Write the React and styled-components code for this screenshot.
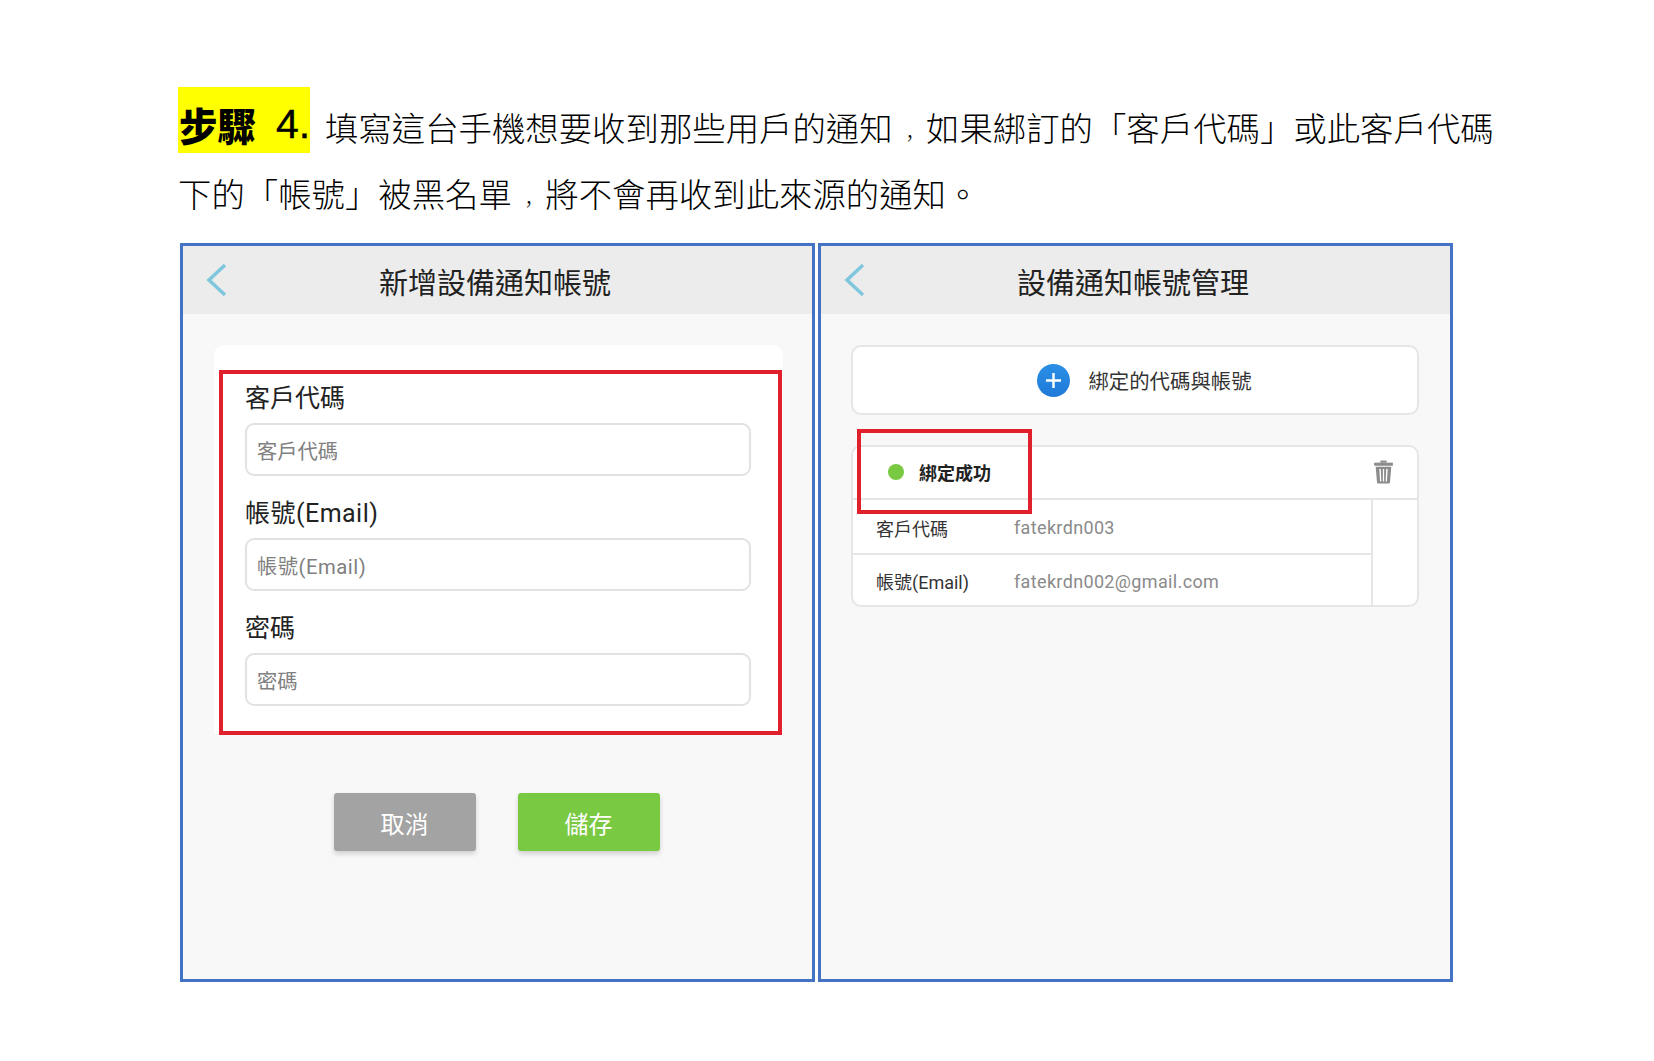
import styled, { createGlobalStyle } from "styled-components";

const GlobalStyle = createGlobalStyle`
  html, body {
    margin: 0;
    background: #fff;
    color: #000;
    font-family: Roboto, "Noto Sans CJK TC", sans-serif;
  }
`;

const Page = styled.div`
  padding: 87px 0 0 178px;
`;

const IntroLine = styled.div`
  display: flex;
  align-items: flex-end;
  height: 66px;
  font-family: "Noto Sans CJK TC", sans-serif;
  font-size: 33.4px;
  font-weight: 300;
  white-space: nowrap;
`;

const TextRun = styled.span`
  line-height: 46px;
  margin-bottom: 3px;
  margin-left: ${(props) => props.$indent || 0}px;
`;

// the comma is small and sits in the middle of its cell in the reference
const Comma = styled.span`
  display: inline-block;
  transform: translate(0, 11px) scale(0.6);
`;

const StepTag = styled.span`
  display: flex;
  align-items: center;
  gap: 20px;
  box-sizing: border-box;
  width: 132px;
  height: 66px;
  padding: 8px 0 0 1px;
  background: #ffff00;
  font-size: 38.5px;
  font-weight: 900;
  line-height: 1;
`;

const StepNumber = styled.span`
  font-family: "Liberation Sans", sans-serif;
  font-weight: 400;
  font-size: 41px;
  -webkit-text-stroke: 0.4px #000;
`;

const Panels = styled.div`
  display: flex;
  gap: 3px;
  margin: 24px 0 0 2px;
`;

const Panel = styled.section`
  position: relative;
  box-sizing: border-box;
  width: 635px;
  height: 739px;
  border: 3px solid #4472c4;
  background: #f9f8f9;
  font-family: Roboto, "Noto Sans CJK TC", sans-serif;
`;

const Header = styled.header`
  position: relative;
  display: flex;
  align-items: center;
  justify-content: center;
  height: 68px;
  padding: 7px 5px 0 0;
  box-sizing: border-box;
  background: #ececec;
`;

const BackIcon = styled.svg`
  position: absolute;
  left: 23px;
  top: 17px;
  width: 22px;
  height: 34px;
`;

const Title = styled.h2`
  margin: 0;
  font-size: 29px;
  font-weight: 400;
  line-height: 40px;
  color: #222;
`;

const FormCard = styled.div`
  margin: 31px 29px 0 31px;
  padding: 37px 32px 28px 31px;
  background: #fff;
  border-radius: 10px 10px 0 0;
`;

const Field = styled.div`
  margin-bottom: 21px;

  &:last-child {
    margin-bottom: 0;
  }
`;

const FieldLabel = styled.label`
  display: block;
  margin-bottom: 7px;
  font-size: 25px;
  line-height: 34px;
  color: #222;
  letter-spacing: ${(props) => (props.$spaced ? "0.47px" : "0")};
`;

const TextInput = styled.input`
  display: block;
  box-sizing: border-box;
  width: 100%;
  height: 53px;
  padding: 5px 10px 0;
  border: 2px solid #e2e2e2;
  border-radius: 9px;
  background: #fff;
  font-family: inherit;
  font-size: 20.3px;
  letter-spacing: ${(props) => (props.$spaced ? "0.5px" : "0")};
  outline: none;

  &::placeholder {
    color: #808080;
    opacity: 1;
  }
`;

const Actions = styled.div`
  display: flex;
  justify-content: center;
  gap: 42px;
  margin-top: 59px;
  padding-right: 2px;
`;

const ActionButton = styled.button`
  width: 142px;
  height: 58px;
  padding: 0;
  border: 0;
  border-radius: 3px;
  background: ${(props) => (props.$primary ? "#7ac943" : "#a3a3a3")};
  box-shadow: 0 3px 5px rgba(0, 0, 0, 0.16);
  color: #fff;
  font-family: inherit;
  font-size: 24px;
`;

const ListBody = styled.div`
  padding: 31px 31px 0 30px;
`;

const Card = styled.div`
  box-sizing: border-box;
  border: 2px solid #e6e6e6;
  border-radius: 10px;
  background: #fff;
`;

const AddCard = styled(Card)`
  display: flex;
  align-items: center;
  justify-content: center;
  gap: 18px;
  height: 70px;
  padding-left: 19px;
  margin-bottom: 30px;
  font-size: 20.4px;
  color: #333;
`;

const BindingCard = styled(Card)`
  height: 162px;
`;

const BindingHead = styled.div`
  display: flex;
  align-items: center;
  box-sizing: content-box;
  height: 49px;
  padding: 0 23px 2px 35px;
  border-bottom: 2px solid #e6e6e6;
`;

const StatusDot = styled.span`
  width: 16px;
  height: 16px;
  margin-right: 15px;
  border-radius: 50%;
  background: #7ac943;
`;

const StatusText = styled.span`
  flex: 1;
  font-size: 18px;
  font-weight: 700;
  color: #222;
`;

const BindingRows = styled.div`
  width: 518px;
  height: 107px;
  border-right: 2px solid #e6e6e6;
`;

const BindingRow = styled.div`
  display: flex;
  align-items: center;
  box-sizing: border-box;
  height: 53px;
  padding: 2px 0 0 23px;
  font-size: 18px;

  & + & {
    height: 54px;
    padding-top: 0;
    border-top: 2px solid #e6e6e6;
  }
`;

const RowLabel = styled.span`
  width: 138px;
  color: #333;
`;

const RowValue = styled.span`
  color: #8a8a8a;
  letter-spacing: 0.35px;
`;

const Highlight = styled.div`
  position: absolute;
  box-sizing: border-box;
  left: ${(props) => props.$left}px;
  top: ${(props) => props.$top}px;
  width: ${(props) => props.$width}px;
  height: ${(props) => props.$height}px;
  border: 4px solid #e0202c;
`;

const BackChevron = () => (
  <BackIcon viewBox="0 0 22 34" fill="none">
    <polyline
      points="19,2 3,17 19,32"
      stroke="#7fc7dd"
      strokeWidth="3.5"
    />
  </BackIcon>
);

const PlusBadge = () => (
  <svg width="33" height="33" viewBox="0 0 33 33">
    <defs>
      <linearGradient id="plusFill" x1="0" y1="0" x2="0" y2="1">
        <stop offset="0" stopColor="#2a8fe6" />
        <stop offset="1" stopColor="#1f7ad8" />
      </linearGradient>
    </defs>
    <circle cx="16.5" cy="16.5" r="16.5" fill="url(#plusFill)" />
    <path d="M16.5 9v15M9 16.5h15" stroke="#fff" strokeWidth="2.4" />
  </svg>
);

const TrashIcon = () => (
  <svg width="21" height="25" viewBox="0 0 20 24">
    <path d="M7 1.5h6v2H7z" fill="#8c8c8c" />
    <path d="M1 3.5h18v3H1z" fill="#8c8c8c" />
    <path
      fillRule="evenodd"
      d="M2.5 7.5h15l-1.3 15a1 1 0 0 1-1 .9H4.8a1 1 0 0 1-1-.9zM6 9.5l.7 12h1.2l-.5-12zM9.4 9.5v12h1.2v-12zM12.6 9.5l-.5 12h1.2l.7-12z"
      fill="#8c8c8c"
    />
  </svg>
);

const fields = [
  { name: "客戶代碼" },
  { name: "帳號(Email)", spaced: true },
  { name: "密碼" },
];

const App = () => {
  return (
    <Page lang="zh-Hant">
      <GlobalStyle />
      <IntroLine>
        <StepTag>
          步驟<StepNumber>4.</StepNumber>
        </StepTag>
        <TextRun $indent={15}>
          填寫這台手機想要收到那些用戶的通知<Comma>，</Comma>如果綁訂的「客戶代碼」或此客戶代碼
        </TextRun>
      </IntroLine>
      <IntroLine>
        <TextRun>
          下的「帳號」被黑名單<Comma>，</Comma>將不會再收到此來源的通知。
        </TextRun>
      </IntroLine>

      <Panels>
        <Panel>
          <Header>
            <BackChevron />
            <Title>新增設備通知帳號</Title>
          </Header>
          <FormCard>
            {fields.map((field) => (
              <Field key={field.name}>
                <FieldLabel $spaced={field.spaced}>{field.name}</FieldLabel>
                <TextInput $spaced={field.spaced} placeholder={field.name} />
              </Field>
            ))}
          </FormCard>
          <Actions>
            <ActionButton>取消</ActionButton>
            <ActionButton $primary>儲存</ActionButton>
          </Actions>
          <Highlight $left={36} $top={124} $width={563} $height={365} />
        </Panel>

        <Panel>
          <Header>
            <BackChevron />
            <Title>設備通知帳號管理</Title>
          </Header>
          <ListBody>
            <AddCard>
              <PlusBadge />
              綁定的代碼與帳號
            </AddCard>
            <BindingCard>
              <BindingHead>
                <StatusDot />
                <StatusText>綁定成功</StatusText>
                <TrashIcon />
              </BindingHead>
              <BindingRows>
                <BindingRow>
                  <RowLabel>客戶代碼</RowLabel>
                  <RowValue>fatekrdn003</RowValue>
                </BindingRow>
                <BindingRow>
                  <RowLabel>帳號(Email)</RowLabel>
                  <RowValue>fatekrdn002@gmail.com</RowValue>
                </BindingRow>
              </BindingRows>
            </BindingCard>
          </ListBody>
          <Highlight $left={36} $top={183} $width={175} $height={85} />
        </Panel>
      </Panels>
    </Page>
  );
};

export default App;
